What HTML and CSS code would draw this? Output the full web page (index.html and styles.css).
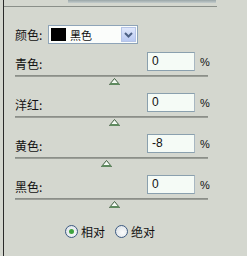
FILE: index.html
```html
<!DOCTYPE html>
<html lang="zh">
<head>
  <meta charset="UTF-8" />
  <title>可选颜色</title>
  <link rel="stylesheet" href="styles.css">
</head>
<body>
  <div class="panel">
    <!-- 顶部残留的边框 -->
    <div class="top-bar"></div>
    <div class="top-line"></div>

    <div class="color-row">
      <span class="label">颜色:</span>
      <div class="select">
        <span class="swatch"></span>
        <span class="select-text">黑色</span>
        <span class="drop">
          <svg width="9" height="6" viewBox="0 0 9 6"><path d="M1 1 L4.5 4.5 L8 1" fill="none" stroke="#4d6185" stroke-width="2"/></svg>
        </span>
      </div>
    </div>

    <div class="channel">
      <div class="ch-head">
        <span class="ch-label">青色:</span>
        <span class="num">0</span>
        <span class="pct">%</span>
      </div>
      <div class="track"></div>
      <div class="thumb-row"><svg class="thumb" style="margin-left: 94px" width="11" height="7" viewBox="0 0 11 7"><path d="M5.5 0.5 L10.5 6.5 L0.5 6.5 Z" fill="#f4fbf4" stroke="#3d5a3d"/><path d="M1 6 L10 6" stroke="#5f8a5f" stroke-width="2"/></svg></div>
    </div>

    <div class="channel">
      <div class="ch-head">
        <span class="ch-label">洋红:</span>
        <span class="num">0</span>
        <span class="pct">%</span>
      </div>
      <div class="track"></div>
      <div class="thumb-row"><svg class="thumb" style="margin-left: 94px" width="11" height="7" viewBox="0 0 11 7"><path d="M5.5 0.5 L10.5 6.5 L0.5 6.5 Z" fill="#f4fbf4" stroke="#3d5a3d"/><path d="M1 6 L10 6" stroke="#5f8a5f" stroke-width="2"/></svg></div>
    </div>

    <div class="channel">
      <div class="ch-head">
        <span class="ch-label">黄色:</span>
        <span class="num">-8</span>
        <span class="pct">%</span>
      </div>
      <div class="track"></div>
      <div class="thumb-row"><svg class="thumb" style="margin-left: 86px" width="11" height="7" viewBox="0 0 11 7"><path d="M5.5 0.5 L10.5 6.5 L0.5 6.5 Z" fill="#f4fbf4" stroke="#3d5a3d"/><path d="M1 6 L10 6" stroke="#5f8a5f" stroke-width="2"/></svg></div>
    </div>

    <div class="channel">
      <div class="ch-head">
        <span class="ch-label">黑色:</span>
        <span class="num">0</span>
        <span class="pct">%</span>
      </div>
      <div class="track"></div>
      <div class="thumb-row"><svg class="thumb" style="margin-left: 94px" width="11" height="7" viewBox="0 0 11 7"><path d="M5.5 0.5 L10.5 6.5 L0.5 6.5 Z" fill="#f4fbf4" stroke="#3d5a3d"/><path d="M1 6 L10 6" stroke="#5f8a5f" stroke-width="2"/></svg></div>
    </div>

    <div class="radios">
      <span class="radio on"></span><span class="radio-label">相对</span>
      <span class="radio"></span><span class="radio-label">绝对</span>
    </div>
  </div>
</body>
</html>
```

FILE: styles.css
```css
body {
  margin: 0;
  background: #d4d7cf;
  font-family: "Noto Sans CJK SC", "DejaVu Sans", sans-serif;
  font-size: 12px;
  color: #111;
}

.panel {
  margin-left: 3px;
  border-left: 1px solid #2a2a2a;
  height: 256px;
  box-sizing: border-box;
}

/* 顶部 */
.top-bar {
  margin-left: 64px;
  width: 148px;
  height: 3px;
  background: linear-gradient(#9aa6a8, #c3cccc);
}

.top-line {
  margin-top: 3px;
  width: 213px;
  height: 1px;
  background: #8a8f89;
}

/* 颜色下拉 */
.color-row {
  display: flex;
  align-items: center;
  margin-top: 18px;
  padding-left: 11px;
  height: 19px;
}

.label {
  width: 33px;
  line-height: 12px;
}

.select {
  width: 90px;
  height: 19px;
  box-sizing: border-box;
  border: 1px solid #8ea4b8;
  background: #fbfdfb;
  display: flex;
  align-items: center;
}

.swatch {
  width: 15px;
  height: 13px;
  margin-left: 2px;
  background: #000;
}

.select-text {
  margin-left: 4px;
  font-size: 11px;
  line-height: 12px;
  flex: 1;
}

.drop {
  width: 15px;
  height: 15px;
  margin-right: 1px;
  background: linear-gradient(#dfe7fb, #b9c9f2);
  border: 1px solid #b5c4e6;
  box-sizing: border-box;
  display: flex;
  align-items: center;
  justify-content: center;
}

/* 通道 */
.channel {
  padding-left: 11px;
  margin-top: 8px;
}

.ch-head {
  display: flex;
  align-items: center;
  height: 19px;
}

.ch-label {
  width: 132px;
  line-height: 12px;
  padding-top: 4px;
}

.num {
  width: 48px;
  height: 19px;
  box-sizing: border-box;
  border: 1px solid #8aa0ae;
  border-right-color: #a9b8c2;
  background: #f5fbf6;
  padding-left: 4px;
  line-height: 17px;
  font-family: "Liberation Sans", sans-serif;
  font-size: 12px;
}

.pct {
  margin-left: 5px;
  font-family: "Liberation Sans", sans-serif;
  font-size: 11px;
}

.track {
  margin-top: 4px;
  width: 193px;
  height: 2px;
  background: linear-gradient(#838781, #a3a69f);
}

.thumb-row {
  height: 8px;
  display: flex;
  align-items: flex-start;
}

.thumb {
  margin-top: 1px;
  display: block;
}

/* 单选 */
.radios {
  display: flex;
  align-items: center;
  margin-top: 17px;
  padding-left: 61px;
}

.radio {
  width: 11px;
  height: 11px;
  border-radius: 50%;
  border: 1px solid #3c5a82;
  background: radial-gradient(circle at 60% 60%, #fafbfc, #d7dde3);
  display: flex;
  align-items: center;
  justify-content: center;
}

.radio.on::after {
  content: "";
  width: 5px;
  height: 5px;
  border-radius: 50%;
  background: #3fa33f;
}

.radio-label {
  margin-left: 3px;
  margin-right: 10px;
  line-height: 12px;
}
```
